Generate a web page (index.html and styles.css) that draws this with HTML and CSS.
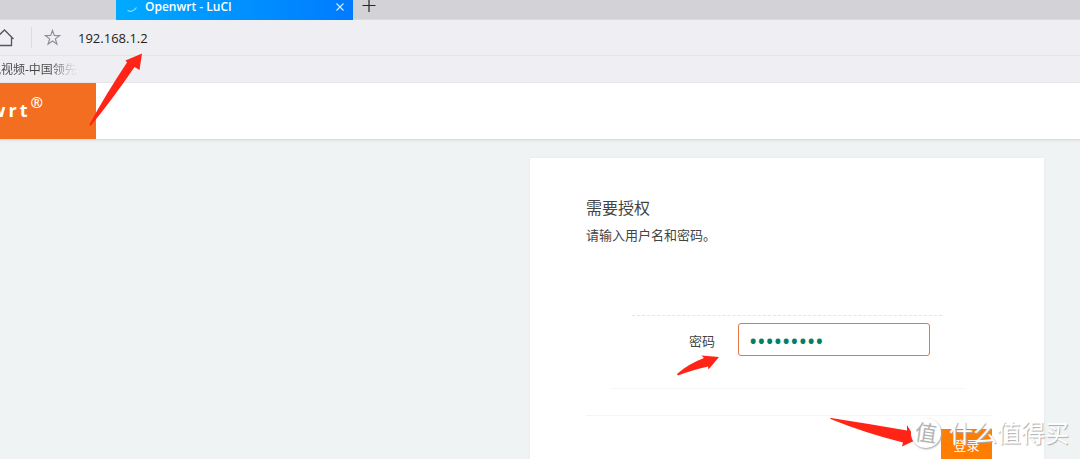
FILE: index.html
```html
<!DOCTYPE html>
<html lang="zh-CN">
<head>
<meta charset="utf-8">
<title>Openwrt - LuCI</title>
<link rel="stylesheet" href="styles.css">
</head>
<body>
<div class="browser">
  <div class="tabs">
    <div class="tab">
      <svg class="spinner" viewBox="0 0 12 12"><path d="M1.500 9.500Q6.500 12 10.500 6.500" fill="none" stroke="#8fd8ff" stroke-width="1.200"/></svg>
      <span class="tab-title">Openwrt - LuCI</span>
      <button class="tab-close" aria-label="关闭标签页"><svg viewBox="0 0 10 10"><path d="M1.500 1.500l7 7M8.500 1.500l-7 7" stroke="#d5ecff" stroke-width="1.100"/></svg></button>
    </div>
    <button class="tab-new" aria-label="新建标签页"><svg viewBox="0 0 14 14"><path d="M7 0v13M0.500 6.500h13" stroke="#25252b" stroke-width="1.200"/></svg></button>
  </div>
  <div class="toolbar">
    <button class="home" aria-label="主页"><svg viewBox="0 0 20 20"><path d="M0 11L9.500 2 18.500 11M2.500 9.500V17.500H16.500V9.500" fill="none" stroke="#55555b" stroke-width="1.300"/></svg></button>
    <span class="divider"></span>
    <button class="star" aria-label="收藏"><svg viewBox="0 0 18 18"><path d="M9 1.500L10.900 6.900 16.500 7 12 10.500 13.700 16 9 12.700 4.300 16 6 10.500 1.500 7 7.100 6.900z" fill="none" stroke="#8c8c92" stroke-width="1.200"/></svg></button>
    <input class="address" aria-label="地址" value="192.168.1.2">
  </div>
  <nav class="bookmarks"><a class="bookmark" href="#">讯视频-中国领先</a></nav>
</div>
<header class="site-header"><a class="brand" href="#">Openwrt<sup>®</sup></a></header>
<main class="page">
  <form class="card">
    <h1 class="title">需要授权</h1>
    <p class="intro">请输入用户名和密码。</p>
    <div class="field">
      <label class="field-label" for="password">密码</label>
      <input class="password" id="password" type="password" value="123456789">
    </div>
    <div class="section-end"></div>
    <div class="actions"><button class="login" type="button">登录</button></div>
  </form>
</main>
<svg class="arrow arrow-address" viewBox="0 0 56 76"><path d="M53 1.500L50.500 18 45.500 15Q23 48 1.500 74 .5 74 .7 72 17 42 38 10.500L36.500 8.500z" fill="#ff2416"/></svg>
<svg class="arrow arrow-password" viewBox="0 0 44 24"><path d="M43 3L32.500 15.500 32 12.500Q18 15.500 2 21.500L1 20Q12 10 28 4L25.500 1.500z" fill="#ff2416"/></svg>
<svg class="arrow arrow-login" viewBox="0 0 88 32"><path d="M86 24L72 30.500 73 26.500Q35 17 .500 3Q-.2 2.500 1 2 40 8 77 14.500L77 9z" fill="#ff2416"/></svg>
<div class="watermark"><span class="seal">值</span><span class="watermark-text">什么值得买</span></div>
</body>
</html>
```

FILE: styles.css
```css
* { box-sizing: border-box; }
body {
  display: flex;
  flex-direction: column;
  position: relative;
  height: 100vh;
  margin: 0;
  overflow: hidden;
  background: #eff3f4;
  color: #444;
  font-family: "Noto Sans", "Noto Sans CJK SC", sans-serif;
}
button { display: flex; align-items: center; justify-content: center; padding: 0; border: 0; background: none; font: inherit; }
input { min-width: 0; font: inherit; outline: none; }
a { color: inherit; text-decoration: none; }
svg { display: block; }
.browser { flex: none; background: #efeef3; }
.tabs { display: flex; height: 20px; padding-left: 116px; background: #d3d2d7; border-bottom: 1px solid #dddce3; }
.tab {
  display: flex;
  align-items: center;
  width: 237px;
  height: 20px;
  padding: 0 8px 7px 10px;
  background: linear-gradient(90deg, #00aaff, #007bff);
  color: #fff;
  font: 12px/14px "Open Sans", sans-serif;
}
.spinner { width: 12px; height: 12px; margin-right: 7px; }
.tab-title { flex: 1; font-weight: 600; }
.tab-close svg { width: 10px; height: 10px; }
.tab-new { height: 12px; margin-left: 9px; }
.tab-new svg { width: 14px; height: 14px; }
.toolbar { display: flex; align-items: center; height: 36px; border-bottom: 1px solid #e5e4e9; }
.home { margin-left: -5px; }
.home svg { width: 20px; height: 20px; }
.divider { width: 1px; height: 21px; margin: 0 12px 0 16px; background: #dcdbe0; }
.star svg { width: 17px; height: 17px; }
.address { flex: 1; margin-left: 17px; padding: 0; border: 0; background: none; color: #222; font: 13px/20px "Open Sans", sans-serif; }
.bookmarks { height: 27px; overflow: hidden; border-bottom: 1px solid #e8e7eb; }
.bookmark {
  display: inline-block;
  margin-left: -11px;
  font-size: 12px;
  line-height: 27px;
  background: linear-gradient(90deg, #444 70%, #dddde2 95%);
  background-clip: text;
  color: transparent;
}
.site-header { display: flex; flex: none; height: 57px; background: #fff; border-bottom: 1px solid #d9dddf; box-shadow: 0 1px 2px #dfe3e5; }
.brand {
  display: flex;
  justify-content: flex-end;
  width: 96px;
  padding: 11px 53px 0 0;
  background: #f46e22;
  color: #fff;
  font: bold 18px/32px "Open Sans", sans-serif;
  letter-spacing: 3px;
}
.brand sup { font-size: 15px; line-height: 16px; letter-spacing: 0; font-weight: 600; }
.page { display: flex; flex: 1; justify-content: flex-end; min-height: 0; padding: 18px 36px 0; }
.card { width: 514px; height: 100%; padding: 38px 52px 0 56px; overflow: hidden; background: #fff; box-shadow: 0 0 2px #e1e5e6; }
.title { margin: 0; font-size: 16px; font-weight: 400; line-height: 24px; }
.intro { margin: 3px 0 68px; font-size: 13px; line-height: 24px; }
.field { display: flex; align-items: center; margin: 0 50px 0 46px; padding: 7px 12px 0 0; border-top: 1px dashed #e5e5e5; }
.field-label { width: 83px; margin-right: 23px; padding-top: 2px; text-align: right; font-size: 13px; }
.password { flex: 1; height: 33px; padding: 0 10px; border: 1px solid #e57847; border-radius: 3px; background: #fff; color: #008066; font: 22px/24px "Noto Sans", sans-serif; }
.section-end { height: 33px; margin: 0 26px 26px 24px; border-bottom: 1px solid #f7f7f7; }
.actions { display: flex; justify-content: flex-end; padding-top: 13px; border-top: 1px solid #f4f4f4; }
.login { width: 51px; height: 32px; background: #ff7d00; color: #fff; font-size: 13px; line-height: 20px; }
.arrow { position: absolute; pointer-events: none; }
.arrow-address { left: 89px; top: 52px; width: 56px; height: 76px; }
.arrow-password { left: 676px; top: 354px; width: 44px; height: 24px; }
.arrow-login { left: 830px; top: 416px; width: 88px; height: 32px; }
.watermark { display: flex; align-items: center; position: absolute; top: 417px; right: 11px; gap: 8px; color: #fff; text-shadow: 1px 1px 1px #aaa; }
.seal { width: 30px; height: 30px; border-radius: 50%; background: #fff; color: #b5b5b5; box-shadow: 1px 1px 2px #aaa; font-size: 22px; line-height: 28px; text-align: center; text-shadow: none; transform: rotate(8deg); }
.watermark-text { font-size: 24px; line-height: 31px; }
```
